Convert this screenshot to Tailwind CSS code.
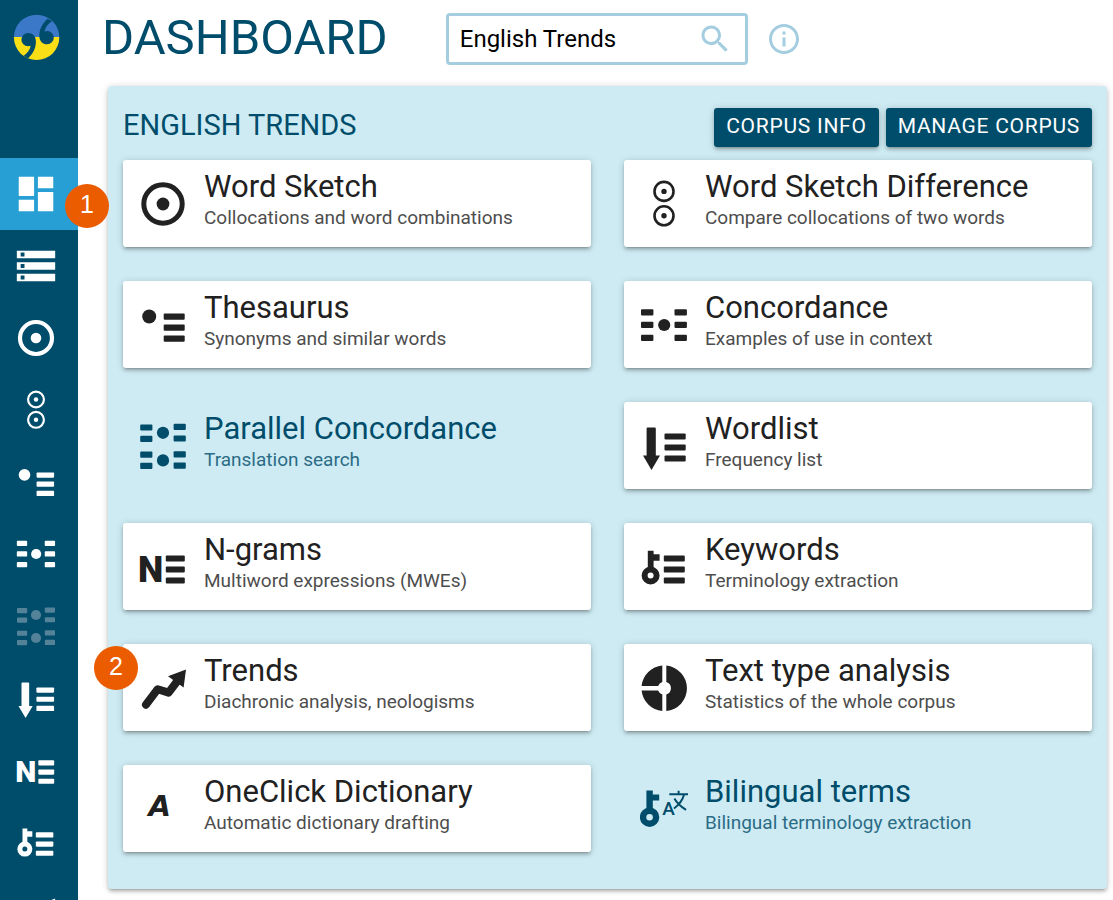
<!DOCTYPE html>
<html lang="en">
<head>
<meta charset="utf-8">
<meta name="viewport" content="width=device-width, initial-scale=1">
<title>Dashboard</title>
<script src="https://cdn.jsdelivr.net/npm/@tailwindcss/browser@4"></script>
</head>
<body class="bg-white font-[Roboto,sans-serif] text-[#212121]">

<svg class="hidden" aria-hidden="true">
  <symbol id="i-sketch" viewBox="0 0 48 48">
    <circle cx="24" cy="24" r="19.2" fill="none" stroke="currentColor" stroke-width="5"/><circle cx="24" cy="24" r="6.4"/>
  </symbol>
  <symbol id="i-diff" viewBox="0 0 48 48">
    <g fill="none" stroke="currentColor" stroke-width="2.6"><circle cx="24" cy="11.4" r="9.5"/><circle cx="24" cy="35.8" r="9.5"/></g>
    <circle cx="24" cy="11.4" r="2.7"/><circle cx="24" cy="35.8" r="2.7"/>
  </symbol>
  <symbol id="i-thes" viewBox="0 0 48 48">
    <circle cx="10.2" cy="15.5" r="7"/>
    <rect x="24.7" y="12.5" width="21" height="6.3" rx="1"/><rect x="24.7" y="23.5" width="21" height="6.3" rx="1"/><rect x="24.7" y="34.5" width="21" height="6.3" rx="1"/>
  </symbol>
  <symbol id="i-conc" viewBox="0 0 48 48">
    <rect x="1" y="8.2" width="12.4" height="6.3" rx="1"/><rect x="1" y="20.7" width="12.4" height="6.3" rx="1"/><rect x="1" y="33.7" width="12.4" height="6.3" rx="1"/>
    <rect x="34.5" y="8.2" width="12.4" height="6.3" rx="1"/><rect x="34.5" y="20.7" width="12.4" height="6.3" rx="1"/><rect x="34.5" y="33.7" width="12.4" height="6.3" rx="1"/>
    <circle cx="24.2" cy="24" r="6.1"/>
  </symbol>
  <symbol id="i-par" viewBox="0 0 48 48">
    <rect x="1.2" y="2.4" width="12.2" height="6.2" rx="1"/><rect x="1.2" y="13.8" width="12.2" height="6.2" rx="1"/><rect x="1.2" y="29.6" width="12.2" height="6.2" rx="1"/><rect x="1.2" y="40.8" width="12.2" height="6.2" rx="1"/>
    <rect x="34.6" y="1.8" width="12.2" height="6.2" rx="1"/><rect x="34.6" y="13.4" width="12.2" height="6.2" rx="1"/><rect x="34.6" y="29.2" width="12.2" height="6.2" rx="1"/><rect x="34.6" y="40.6" width="12.2" height="6.2" rx="1"/>
    <circle cx="24" cy="10.8" r="6.1"/><circle cx="24" cy="38.4" r="6.1"/>
  </symbol>
  <symbol id="i-words" viewBox="0 0 48 48">
    <path d="M7.6 5.4h7.2q1 0 1 1v27.1h4.2L11.5 48 3 33.5h3.6V6.4q0-1 1-1z"/>
    <rect x="24.5" y="11.4" width="21.2" height="6.2" rx="1"/><rect x="24.5" y="22.4" width="21.2" height="6.2" rx="1"/><rect x="24.5" y="33.4" width="21.2" height="6.2" rx="1"/>
  </symbol>
  <symbol id="i-ngram" viewBox="0 0 48 48">
    <text x="-1" y="38.8" font-family="Roboto" font-weight="900" font-size="36">N</text>
    <rect x="26.8" y="12.4" width="19" height="6.2" rx="1"/><rect x="26.8" y="23.4" width="19" height="6.2" rx="1"/><rect x="26.8" y="34.4" width="19" height="6.2" rx="1"/>
  </symbol>
  <symbol id="i-key" viewBox="0 0 48 48">
    <circle cx="10.6" cy="32.5" r="6" fill="none" stroke="currentColor" stroke-width="6"/>
    <path d="M7.8 7.8h5.8v3.4h6v6.6h-6v7.5H7.8z"/>
    <rect x="23.8" y="12.4" width="21" height="6.2" rx="1"/><rect x="23.8" y="23.4" width="21" height="6.2" rx="1"/><rect x="23.8" y="34.4" width="21" height="6.2" rx="1"/>
  </symbol>
  <symbol id="i-trend" viewBox="0 0 48 48">
    <path d="M7 40.7 18.7 25.2 29.6 28.6 38 17.5" fill="none" stroke="currentColor" stroke-width="8" stroke-linecap="round" stroke-linejoin="round"/>
    <path d="M47 5.5 29 12.2 44.6 23.6z"/>
  </symbol>
  <symbol id="i-pie" viewBox="0 0 48 48">
    <path d="M22.300 1.600A22.800 22.800 0 0 0 1.600 22H18.100A6.600 6.600 0 0 1 22.300 18zM1.600 26.600A22.800 22.800 0 0 0 22.300 47V30.600A6.600 6.600 0 0 1 18.100 26.600zM26.300 1.600A22.800 22.800 0 0 1 26.300 47V30.600A6.600 6.600 0 0 0 26.300 18z"/>
  </symbol>
  <symbol id="i-dict" viewBox="0 0 48 48">
    <text x="9.5" y="31" font-family="DejaVu Sans" font-style="italic" font-weight="700" font-size="29">A</text>
  </symbol>
  <symbol id="i-bi" viewBox="0 0 48 48">
    <circle cx="9.6" cy="32.2" r="6.5" fill="none" stroke="currentColor" stroke-width="6.4"/>
    <path d="M6.400 5.500h6.400v4h6.400v6h-6.400v9H6.400z"/>
    <text x="22.300" y="29.500" font-family="Roboto" font-weight="500" font-size="19">A</text>
    <path d="M29.300 9.200h19M38.600 5.800v3.400M34.400 13.500Q38 20 46 24.800M44 9.800Q42 17.500 34 23.500" fill="none" stroke="currentColor" stroke-width="2"/>
  </symbol>
  <symbol id="i-dash" viewBox="0 0 24 24"><path d="M3 13h8V3H3v10zm0 8h8v-6H3v6zm10 0h8V11h-8v10zm0-18v6h8V3h-8z"/></symbol>
  <symbol id="i-store" viewBox="0 0 24 24"><path d="M2 20h20v-4H2v4zm2-3h2v2H4v-2zM2 4v4h20V4H2zm4 3H4V5h2v2zm-4 7h20v-4H2v4zm2-3h2v2H4v-2z"/></symbol>
</svg>

<div class="flex h-screen overflow-hidden">
  <nav aria-label="Main" class="relative z-10 w-[78px] shrink-0 bg-[#004d6b] text-white">
    <a href="#" aria-label="Home" class="flex h-[158px] pt-[14px] pl-[13px]">
      <svg class="size-[47px]" viewBox="0 0 47 47">
        <clipPath id="disc"><circle cx="23.6" cy="23.4" r="22.7"/></clipPath>
        <g clip-path="url(#disc)">
          <path fill="#3c78c8" d="M0 0h47v23H0z"/><path fill="#fadf17" d="M0 23h47v24H0z"/>
          <g fill="#004d6b">
            <path d="M15 19.100c4.800 0 7.900 3.400 7.900 8.600 0 7-3.400 12.600-8.300 17l-4.600-2.400c4.200-2.800 7-6.200 7.700-10.500-.8.3-1.700.5-2.700.5a6.600 6.600 0 0 1 0-13.200z"/>
            <path transform="rotate(180 24.600 24.700)" d="M15 19.100c4.800 0 7.900 3.400 7.900 8.600 0 7-3.400 12.600-8.300 17l-4.600-2.400c4.200-2.800 7-6.200 7.700-10.500-.8.3-1.700.5-2.700.5a6.600 6.600 0 0 1 0-13.200z"/>
          </g>
        </g>
      </svg>
    </a>
    <ul class="[&_a]:flex [&_a]:h-[72px] [&_a]:items-center [&_a]:justify-center [&_a]:pr-1.5 [&_svg]:size-10 [&_svg]:fill-current">
      <li class="relative bg-[#289fd4]">
        <a href="#" aria-label="Dashboard" aria-current="page"><svg class="size-[46px]!"><use href="#i-dash"/></svg></a>
        <span class="absolute top-[26px] left-[65px] flex size-11 items-center justify-center rounded-full bg-[#eb5b00] pb-0.5 font-['Liberation_Sans',sans-serif] text-[25px]">1</span>
      </li>
      <li><a href="#" aria-label="Corpora"><svg class="size-[46px]!"><use href="#i-store"/></svg></a></li>
      <li><a href="#" aria-label="Word Sketch"><svg><use href="#i-sketch"/></svg></a></li>
      <li><a href="#" aria-label="Word Sketch Difference"><svg><use href="#i-diff"/></svg></a></li>
      <li><a href="#" aria-label="Thesaurus"><svg><use href="#i-thes"/></svg></a></li>
      <li><a href="#" aria-label="Concordance"><svg><use href="#i-conc"/></svg></a></li>
      <li><a href="#" aria-label="Parallel Concordance" class="text-[#538299]"><svg><use href="#i-par"/></svg></a></li>
      <li><a href="#" aria-label="Wordlist"><svg><use href="#i-words"/></svg></a></li>
      <li><a href="#" aria-label="N-grams"><svg><use href="#i-ngram"/></svg></a></li>
      <li><a href="#" aria-label="Keywords"><svg><use href="#i-key"/></svg></a></li>
      <li><a href="#" aria-label="Trends"><svg><use href="#i-trend"/></svg></a></li>
    </ul>
  </nav>

  <main class="min-w-0 flex-1 pr-1.5 pl-[30px]">
    <header class="-ml-1.5 flex h-[86px] items-start pt-[13px]">
      <h1 class="mr-[58px] text-[49px] leading-[50px] text-[#004d6b]">DASHBOARD</h1>
      <label class="flex h-[52px] w-[302px] items-center rounded-[4px] border-3 border-[#a4cee0] pr-3 pl-[11px]">
        <span class="sr-only">Corpus</span>
        <input type="text" value="English Trends" class="h-full min-w-0 flex-1 text-[24px] text-black outline-none">
        <svg class="size-9 fill-[#a4cee0]" viewBox="0 0 24 24"><path d="M15.500 14h-.79l-.28-.27C15.410 12.590 16 11.110 16 9.500 16 5.910 13.090 3 9.500 3S3 5.910 3 9.500 5.910 16 9.500 16c1.610 0 3.090-.59 4.230-1.570l.27.28v.79l5 4.990L20.490 19l-4.990-5zm-6 0C7.010 14 5 11.990 5 9.500S7.010 5 9.500 5 14 7.010 14 9.500 11.990 14 9.500 14z"/></svg>
      </label>
      <button type="button" aria-label="About this corpus" class="mt-2 ml-[18px]">
        <svg class="size-9 fill-[#a4cee0]" viewBox="0 0 24 24"><path d="M11 7h2v2h-2zm0 4h2v6h-2zm1-9C6.480 2 2 6.480 2 12s4.480 10 10 10 10-4.480 10-10S17.520 2 12 2zm0 18c-4.410 0-8-3.590-8-8s3.590-8 8-8 8 3.590 8 8-3.590 8-8 8z"/></svg>
      </button>
    </header>

    <section class="rounded-[4px] bg-[#ceebf3] px-[15px] pt-[22px] pb-[37px] shadow-[0_3px_3px_rgba(0,0,0,0.14),0_4px_1px_-3px_rgba(0,0,0,0.12),0_1px_7px_rgba(0,0,0,0.2)]">
      <div class="flex h-[52px] items-start gap-[7px]">
        <h2 class="mr-auto text-[29px] leading-[34px] text-[#004d6b]">ENGLISH TRENDS</h2>
        <button type="button" class="h-[39px] rounded-[3px] bg-[#004d6b] px-3 pb-0.5 text-[21px] tracking-[0.035em] text-white shadow-[0_3px_3px_rgba(0,0,0,0.14),0_4px_1px_-3px_rgba(0,0,0,0.12),0_1px_7px_rgba(0,0,0,0.2)]">CORPUS INFO</button>
        <button type="button" class="h-[39px] rounded-[3px] bg-[#004d6b] px-3 pb-0.5 text-[21px] tracking-[0.035em] text-white shadow-[0_3px_3px_rgba(0,0,0,0.14),0_4px_1px_-3px_rgba(0,0,0,0.12),0_1px_7px_rgba(0,0,0,0.2)]">MANAGE CORPUS</button>
      </div>

      <ul class="grid grid-cols-2 gap-x-[33px] gap-y-[34px] [&_a]:flex [&_a]:h-[87px] [&_a]:items-center [&_a]:gap-[17px] [&_a]:rounded-[3px] [&_a]:pl-4 [&_a>svg]:size-12 [&_a>svg]:shrink-0 [&_a>svg]:fill-current [&_h3]:text-[31px] [&_h3]:leading-[36px] [&_p]:text-[19px] [&_p]:leading-[26px] [&_a>div]:h-[70px] [&_p]:opacity-80 [&_.card]:bg-white [&_.card]:shadow-[0_3px_3px_rgba(0,0,0,0.14),0_4px_1px_-3px_rgba(0,0,0,0.12),0_1px_7px_rgba(0,0,0,0.2)]">
        <li><a href="#" class="card"><svg><use href="#i-sketch"/></svg><div><h3>Word Sketch</h3><p>Collocations and word combinations</p></div></a></li>
        <li><a href="#" class="card"><svg><use href="#i-diff"/></svg><div><h3>Word Sketch Difference</h3><p>Compare collocations of two words</p></div></a></li>
        <li><a href="#" class="card"><svg><use href="#i-thes"/></svg><div><h3>Thesaurus</h3><p>Synonyms and similar words</p></div></a></li>
        <li><a href="#" class="card"><svg><use href="#i-conc"/></svg><div><h3>Concordance</h3><p>Examples of use in context</p></div></a></li>
        <li><a href="#" class="text-[#004d6b]"><svg><use href="#i-par"/></svg><div><h3>Parallel Concordance</h3><p>Translation search</p></div></a></li>
        <li><a href="#" class="card"><svg><use href="#i-words"/></svg><div><h3>Wordlist</h3><p>Frequency list</p></div></a></li>
        <li><a href="#" class="card"><svg><use href="#i-ngram"/></svg><div><h3>N-grams</h3><p>Multiword expressions (MWEs)</p></div></a></li>
        <li><a href="#" class="card"><svg><use href="#i-key"/></svg><div><h3>Keywords</h3><p>Terminology extraction</p></div></a></li>
        <li class="relative"><a href="#" class="card"><svg><use href="#i-trend"/></svg><div><h3>Trends</h3><p>Diachronic analysis, neologisms</p></div></a>
          <span class="absolute top-0.5 -left-[29px] flex size-11 items-center justify-center rounded-full bg-[#eb5b00] pb-0.5 font-['Liberation_Sans',sans-serif] text-[25px] text-white">2</span></li>
        <li><a href="#" class="card"><svg><use href="#i-pie"/></svg><div><h3>Text type analysis</h3><p>Statistics of the whole corpus</p></div></a></li>
        <li><a href="#" class="card"><svg><use href="#i-dict"/></svg><div><h3>OneClick Dictionary</h3><p>Automatic dictionary drafting</p></div></a></li>
        <li><a href="#" class="text-[#004d6b]"><svg class="overflow-visible"><use href="#i-bi"/></svg><div><h3>Bilingual terms</h3><p>Bilingual terminology extraction</p></div></a></li>
      </ul>
    </section>
  </main>
</div>
</body>
</html>
